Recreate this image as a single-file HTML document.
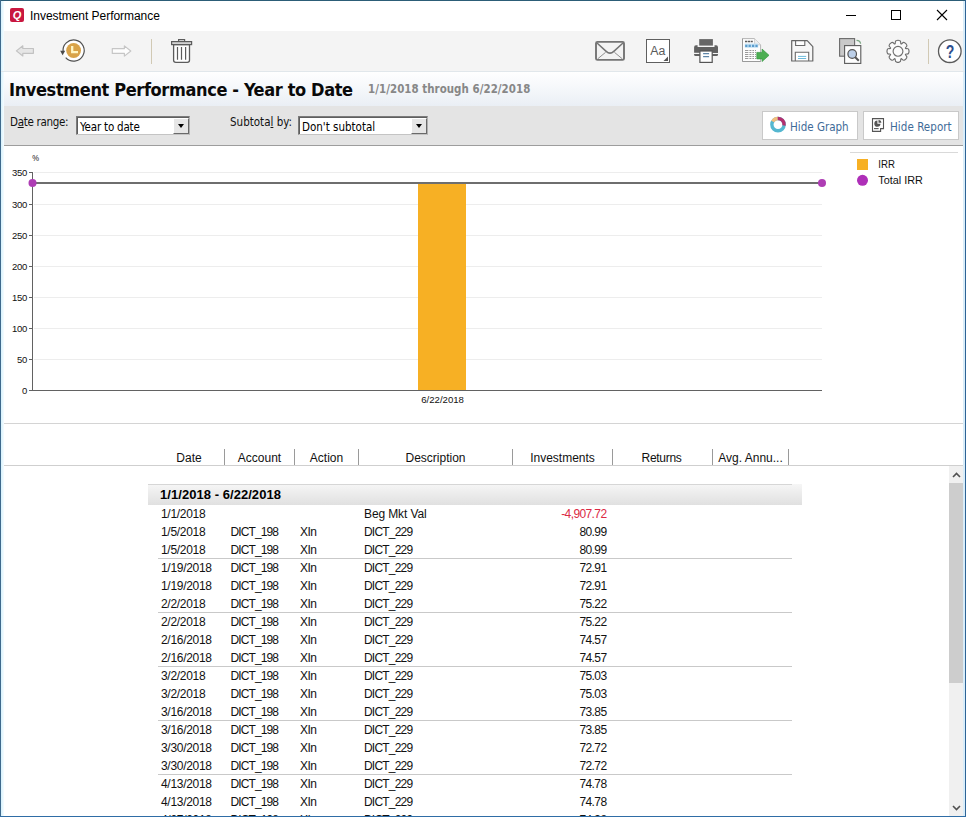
<!DOCTYPE html>
<html lang="en">
<head>
<meta charset="utf-8">
<title>Investment Performance</title>
<style>
*{box-sizing:border-box;margin:0;padding:0}
html,body{width:966px;height:817px;overflow:hidden;background:#fff}
body{position:relative;font-family:"Liberation Sans",sans-serif;font-size:12px;color:#111}
.abs{position:absolute}
#win{position:absolute;left:0;top:0;width:966px;height:817px;overflow:hidden;background:#fff}
#bT{left:0;top:0;width:966px;height:1px;background:#2c5d77}
#bL{left:0;top:0;width:1px;height:817px;background:#3f6a8d}
#bL2{left:1px;top:1px;width:3px;height:815px;background:linear-gradient(to right,#d6f2fd,#f6fcff)}
#bR{left:965px;top:0;width:1px;height:817px;background:#2e6496}
#bR2{left:963px;top:1px;width:2px;height:815px;background:#d9edf9}
#bB{left:0;top:816px;width:966px;height:1px;background:#2f6da6}
/* title bar */
#tbar{left:1px;top:1px;width:964px;height:30px;background:#fff}
#qicon{left:10px;top:8px;width:14px;height:14px;background:#c9173f;border-radius:2px;color:#fff;font:italic bold 11px "Liberation Sans",sans-serif;text-align:center;line-height:14px}
#ttext{left:30px;top:9px;letter-spacing:-0.04px;font:12px "Liberation Sans",sans-serif;color:#000;white-space:nowrap;line-height:15px}
/* toolbar */
#tool{left:1px;top:31px;width:964px;height:40px;background:#f4f4f4}
#toolline{left:1px;top:71px;width:964px;height:1px;background:#e1e7eb;z-index:2}
/* heading */
#head{left:1px;top:71px;width:964px;height:35px;background:linear-gradient(#ffffff 0%,#f6f8fb 45%,#eaeff5 100%)}
#h1{left:9px;top:79px;font:bold 18px "DejaVu Sans Condensed","DejaVu Sans",sans-serif;letter-spacing:-0.37px;color:#0a0a0a;white-space:nowrap;line-height:22px}
#h2{left:368px;top:82px;font:bold 11.4px "DejaVu Sans Condensed","DejaVu Sans",sans-serif;letter-spacing:0.05px;color:#878787;white-space:nowrap;line-height:14px}
/* filter */
#filt{left:1px;top:106px;width:964px;height:39px;background:#e4e4e4}
#filtline{left:1px;top:145px;width:964px;height:1px;background:#9d9d9d}
.lbl{font:11.5px "DejaVu Sans Condensed","DejaVu Sans",sans-serif;color:#111;white-space:nowrap;line-height:14px}
.combo{background:#fff;border:1px solid #7b7b7b;border-right-color:#b0b0b0;border-bottom-color:#c4c4c4;box-shadow:inset 1px 1px 0 #5e5e5e;height:19px}
.combo span{position:absolute;left:3px;top:3px;font:11.5px "DejaVu Sans Condensed","DejaVu Sans",sans-serif;line-height:14px;white-space:nowrap;color:#000}
.dd{position:absolute;right:0px;top:1px;width:16px;height:16px;background:#e6e6e6;border:1px solid #fff;border-right-color:#6a6a6a;border-bottom-color:#6a6a6a}
.dd:after{content:"";position:absolute;left:3.6px;top:5.2px;border:3.8px solid transparent;border-top:4.4px solid #000;border-bottom:0}
.btn{background:#fff;border:1px solid #c9c9c9;height:29px;top:111px}
.btn span{position:absolute;top:8px;font:11.5px "DejaVu Sans Condensed","DejaVu Sans",sans-serif;color:#3f6b98;line-height:14px;white-space:nowrap}
/* chart */
#chart{left:1px;top:146px;width:964px;height:277px;background:#fff}
#chartline{left:1px;top:423px;width:964px;height:1px;background:#d4d4d4}
/* column header */
.ch{top:451px;font:12px "Liberation Sans",sans-serif;color:#111;line-height:15px;white-space:nowrap;text-align:center}
.vs{top:449px;width:1px;height:17px;background:#9a9a9a}
#hline{left:1px;top:465px;width:963px;height:1px;background:#cfcfcf}
/* report */
#band{left:148px;top:484px;width:654px;height:21px;background:linear-gradient(#f6f6f6,#e0e0e0)}
#bandt{left:160px;top:487px;font:bold 13px "Liberation Sans",sans-serif;letter-spacing:0.05px;line-height:15px;white-space:nowrap;color:#000}
.row{left:0;width:966px;height:18px;font:12px "Liberation Sans",sans-serif;line-height:18px;white-space:nowrap;color:#111}
.row i{position:absolute;font-style:normal;top:0}
.c1{left:161px;letter-spacing:-0.3px}
.c2{left:230.5px;letter-spacing:-0.9px}
.c3{left:300px;letter-spacing:-0.5px}
.c4{left:364px;letter-spacing:-0.8px}
.c4b{letter-spacing:-0.12px}
.c5{right:359.5px;letter-spacing:-0.6px}
.sep{left:158px;width:634px;height:1px;background:#c9c9c9}
/* scrollbar */
#sb{left:949px;top:466px;width:15px;height:350px;background:#f0f0f0}
#sbt{left:949px;top:483px;width:15px;height:200px;background:#cdcdcd}
</style>
</head>
<body>
<div id="win">
<div class="abs" id="tbar"></div>
<div class="abs" id="qicon">Q</div>
<div class="abs" id="ttext">Investment Performance</div>
<svg class="abs" style="left:840px;top:5px" width="115" height="22" viewBox="840 5 115 22">
<path d="M846 15.5h10" stroke="#000" stroke-width="1" fill="none"/>
<rect x="891.5" y="10.5" width="9" height="9" stroke="#000" stroke-width="1" fill="none"/>
<path d="M937 10l10 10M947 10l-10 10" stroke="#000" stroke-width="1.1" fill="none"/>
</svg>

<div class="abs" id="tool"></div>
<div class="abs" id="toolline"></div>
<svg class="abs" style="left:0;top:31px" width="966" height="40" viewBox="0 31 966 40" font-family="Liberation Sans, sans-serif">
<!-- back arrow -->
<path d="M16.4 50.9 L22.8 45.8 V48.5 H33.4 V53.3 H22.8 V56 Z" fill="#e6e6e6" stroke="#c2c2c2" stroke-width="1.2" stroke-linejoin="round"/>
<!-- history -->
<circle cx="73.6" cy="50.5" r="10.6" fill="#fff"/>
<path d="M63.10 51.98 A10.6 10.6 0 1 1 65.72 57.59" fill="none" stroke="#505050" stroke-width="1.2"/>
<path d="M60.2 50.8 L65.2 50.8 L62.6 55.2 Z" fill="#4a4a4a"/>
<circle cx="73.6" cy="50.5" r="7.4" fill="#d9a349"/>
<path d="M72.2 46.1 V52.1 H78" fill="none" stroke="#fff6c4" stroke-width="2.3"/>
<!-- forward arrow -->
<path d="M130.8 51 L124.4 45.9 V48.6 H112.3 V53.4 H124.4 V56.1 Z" fill="#fdfdfd" stroke="#c6c6c6" stroke-width="1.2" stroke-linejoin="round"/>
<!-- separator -->
<path d="M151.5 39V64" stroke="#d1c9b4" stroke-width="1"/>
<!-- trash -->
<path d="M178.6 41.3 V39.6 H184.6 V41.3" fill="#f4f4f4" stroke="#5c5c5c" stroke-width="1.2"/>
<path d="M173.6 44.6 V60.2 Q173.6 62.3 175.8 62.3 H187.3 Q189.5 62.3 189.5 60.2 V44.6 Z" fill="#fff" stroke="#5c5c5c" stroke-width="1.3"/>
<rect x="171.6" y="41.6" width="20" height="3" fill="#d4d4d4" stroke="#5c5c5c" stroke-width="1.2"/>
<path d="M177.5 47V59.8M181.5 47V59.8M185.6 47V59.8" stroke="#5c5c5c" stroke-width="1.2"/>
<!-- envelope -->
<rect x="596" y="41.9" width="28" height="18" rx="1.5" fill="#f3f3f3" stroke="#747474" stroke-width="1.9"/>
<path d="M597 43 L606.2 51.4 Q610 54.9 613.8 51.4 L623 43" fill="none" stroke="#747474" stroke-width="1.5"/>
<path d="M597.5 59 L605.6 52.3M622.5 59 L614.4 52.3" stroke="#858585" stroke-width="0.9"/>
<!-- Aa -->
<rect x="646.5" y="39.5" width="23" height="23" fill="#fff" stroke="#5f5f5f" stroke-width="1"/>
<text x="650.3" y="54.7" font-size="12.3" fill="#5a5a5a">Aa</text>
<path d="M668 56.5V61H663.5Z" fill="#555"/>
<!-- printer -->
<rect x="699.2" y="39.1" width="13.7" height="6.5" fill="#666"/>
<path d="M694.1 52.8 V47.2 Q694.1 45.2 696 45.2 H697.6 V46.9 H714.5 V45.2 H716.1 Q718 45.2 718 47.2 V52.9 Z" fill="#616161"/>
<path d="M694.1 53.9 H718 V54.8 Q718 56 716.6 56 H695.5 Q694.1 56 694.1 54.8 Z" fill="#616161"/>
<rect x="699.9" y="51" width="12.3" height="11.4" fill="#fff" stroke="#555" stroke-width="1.2"/>
<path d="M703.1 53.6H709.1M703.1 56.6H709.1" stroke="#5f86a8" stroke-width="1.1"/>
<!-- export -->
<path d="M742.5 38.6 H754.6 L760.6 44.8 V61.5 H742.5 Z" fill="#fdfdfd" stroke="#b4b4b4" stroke-width="1"/>
<path d="M742.5 38.6 V61.5 H760.6" fill="none" stroke="#9a9a9a" stroke-width="1"/>
<path d="M754.6 38.6 V44.8 H760.6" fill="#efefef" stroke="#c4c4c4" stroke-width="0.8"/>
<path d="M745 41.6H753" stroke="#5a5a5a" stroke-width="1.5" stroke-dasharray="2.2 0.6"/>
<rect x="744.8" y="43.6" width="13.4" height="4.2" fill="#c4e2f4"/>
<path d="M745.2 45.8H758" stroke="#5b9ccc" stroke-width="2.2" stroke-dasharray="2.2 1.2"/>
<path d="M745 50.5H756M745 52.5H756M745 54.5H756M745 56.5H756M745 58.5H756" stroke="#8e8e8e" stroke-width="0.9" stroke-dasharray="3.4 1 2 1 1.6 1"/>
<path d="M756.8 52.4 H762.1 V49.1 L769 55.3 L762.1 61.5 V58.9 H756.8 Z" fill="#4cae52" stroke="#379a42" stroke-width="0.7" stroke-linejoin="round"/>
<!-- save -->
<path d="M791.7 40.6 H807.2 L812.8 46.6 V61 H791.7 Z" fill="#f7f7f7"/>
<path d="M795.6 40.6 V45.5 H804.8 V40.6" fill="#fff" stroke="#6a6a6a" stroke-width="1.1"/>
<path d="M795.3 61 V52.3 H808.7 V61" fill="#fff" stroke="#6a6a6a" stroke-width="1.1"/>
<path d="M798 56.4H806.2M798 58.5H806.2" stroke="#6fbcdc" stroke-width="1"/>
<path d="M791.7 40.6 H807.2 L812.8 46.6 V61 H791.7 Z" fill="none" stroke="#666" stroke-width="1.2" stroke-linejoin="round"/>
<!-- preview -->
<rect x="839.6" y="38.6" width="15" height="17.6" fill="#c9c9c9" stroke="#6a6a6a" stroke-width="1.1"/>
<path d="M856.5 40.3 Q860.3 40.3 860.6 43.8" fill="none" stroke="#7da684" stroke-width="1.2"/>
<rect x="844.6" y="45.6" width="16.2" height="17.8" fill="#fdfdfd" stroke="#5a5a5a" stroke-width="1.1"/>
<path d="M855 57 L858.8 60.8" stroke="#555" stroke-width="2"/>
<circle cx="852.2" cy="54" r="4.3" fill="#bccfe8" stroke="#555" stroke-width="1.2"/>
<!-- gear -->
<g transform="translate(898 51.3)" fill="#fbfbfb" stroke="#6e6e6e" stroke-width="1.15">
<path d="M-3.06 -7.39 C-1.98 -7.75 -3.95 -10.48 -1.30 -10.82 Q0.00 -11.25 1.30 -10.82 C3.95 -10.48 1.98 -7.75 3.06 -7.39 C4.08 -6.88 4.62 -10.20 6.73 -8.57 Q7.95 -7.95 8.57 -6.73 C10.20 -4.62 6.88 -4.08 7.39 -3.06 C7.75 -1.98 10.48 -3.95 10.82 -1.30 Q11.25 0.00 10.82 1.30 C10.48 3.95 7.75 1.98 7.39 3.06 C6.88 4.08 10.20 4.62 8.57 6.73 Q7.95 7.95 6.73 8.57 C4.62 10.20 4.08 6.88 3.06 7.39 C1.98 7.75 3.95 10.48 1.30 10.82 Q0.00 11.25 -1.30 10.82 C-3.95 10.48 -1.98 7.75 -3.06 7.39 C-4.08 6.88 -4.62 10.20 -6.73 8.57 Q-7.95 7.95 -8.57 6.73 C-10.20 4.62 -6.88 4.08 -7.39 3.06 C-7.75 1.98 -10.48 3.95 -10.82 1.30 Q-11.25 0.00 -10.82 -1.30 C-10.48 -3.95 -7.75 -1.98 -7.39 -3.06 C-6.88 -4.08 -10.20 -4.62 -8.57 -6.73 Q-7.95 -7.95 -6.73 -8.57 C-4.62 -10.20 -4.08 -6.88 -3.06 -7.39 Z" stroke-linejoin="round"/>
<circle r="4.9"/>
</g>
<!-- separator -->
<path d="M928.5 39V64" stroke="#d1c9b4" stroke-width="1"/>
<!-- help -->
<circle cx="949.8" cy="51.2" r="11.3" fill="#fff" stroke="#5a5a5a" stroke-width="1.3"/>
<text x="950" y="58.3" font-size="18" font-weight="bold" fill="#2d4f8e" text-anchor="middle" textLength="8.6" lengthAdjust="spacingAndGlyphs">?</text>
</svg>


<div class="abs" id="head"></div>
<div class="abs" id="h1">Investment Performance - Year to Date</div>
<div class="abs" id="h2">1/1/2018 through 6/22/2018</div>

<div class="abs" id="filt"></div>
<div class="abs" id="filtline"></div>
<div class="abs lbl" style="left:10px;top:115px;letter-spacing:-0.3px">D<u>a</u>te range:</div>
<div class="abs combo" style="left:76px;top:116px;width:114px"><span style="letter-spacing:-0.2px">Year to date</span><div class="dd"></div></div>
<div class="abs lbl" style="left:230px;top:115px">Subtota<u>l</u> by:</div>
<div class="abs combo" style="left:298px;top:116px;width:130px"><span>Don't subtotal</span><div class="dd"></div></div>
<div class="abs btn" style="left:762px;width:96px"><span style="left:27px">Hide Graph</span></div>
<div class="abs btn" style="left:863px;width:96px"><span style="left:26px;letter-spacing:0.05px">Hide Report</span></div>
<svg class="abs" style="left:762px;top:111px" width="197" height="29" viewBox="762 111 197 29">
<g fill="none" stroke-width="3.4">
<circle cx="778.0" cy="124.6" r="6.15" stroke="#55b7d0"/>
<path d="M772.67 121.52 A6.15 6.15 0 0 1 777.79 118.45" stroke="#f3bd7c"/>
<path d="M777.79 118.45 A6.15 6.15 0 0 1 784.09 125.46" stroke="#b42f6e"/>
</g>
<path d="M872.5 118.6 H883.5 V128.6 H880.6 V131.4 H872.5 Z" fill="#fff" stroke="#555" stroke-width="1.1"/>
<path d="M874 128.6H878.6" stroke="#555" stroke-width="1.1"/>
<path d="M877.4 120.6 A3.1 3.1 0 1 0 880.5 123.8 H877.4 Z" fill="#555"/>
<path d="M878.5 119.9 A2.9 2.9 0 0 1 881.4 122.8 H878.5 Z" fill="#555"/>
</svg>


<div class="abs" id="chart"></div>
<svg class="abs" style="left:0;top:146px" width="966" height="277" viewBox="0 146 966 277" font-family="Liberation Sans, sans-serif">
<g stroke="#ededed" stroke-width="1">
<path d="M34 172.5H822M34 204.5H822M34 235.5H822M34 266.5H822M34 297.5H822M34 328.5H822M34 359.5H822"/>
</g>
<rect x="418" y="183" width="48" height="208" fill="#f7b024"/>
<path d="M32.5 172V391M32 390.5H822" stroke="#626262" stroke-width="1" fill="none"/>
<path d="M29 172.5h4M29 204.5h4M29 235.5h4M29 266.5h4M29 297.5h4M29 328.5h4M29 359.5h4M29 390.5h4" stroke="#626262" stroke-width="1"/>
<path d="M32 183H822" stroke="#6e6e6e" stroke-width="2"/>
<circle cx="32.5" cy="183" r="4" fill="#ae3db4"/>
<circle cx="822" cy="183" r="4" fill="#ae3db4"/>
<g font-size="9.5" fill="#111" text-anchor="end" letter-spacing="-0.25">
<text x="27" y="175.8">350</text>
<text x="27" y="207.8">300</text>
<text x="27" y="238.8">250</text>
<text x="27" y="269.8">200</text>
<text x="27" y="300.8">150</text>
<text x="27" y="331.8">100</text>
<text x="27" y="362.8">50</text>
<text x="27" y="393.8">0</text>
</g>
<text x="32.2" y="160.8" font-size="9.6" fill="#111" textLength="6.8" lengthAdjust="spacingAndGlyphs">%</text>
<text x="442.6" y="402.8" font-size="9.6" fill="#111" text-anchor="middle">6/22/2018</text>
<path d="M850 152.5H958" stroke="#d9d9d9" stroke-width="1"/>
<rect x="857" y="159" width="11" height="11" fill="#f7b024"/>
<circle cx="862.5" cy="180.3" r="5.5" fill="#ae2fb8"/>
<text x="878.3" y="167.9" font-size="10.5" fill="#111" textLength="16.6" lengthAdjust="spacingAndGlyphs">IRR</text>
<text x="878.3" y="183.9" font-size="10.5" fill="#111" textLength="44.6" lengthAdjust="spacingAndGlyphs">Total IRR</text>
</svg>

<div class="abs" id="chartline"></div>

<div class="abs ch" style="left:159px;width:60px">Date</div>
<div class="abs ch" style="left:225px;width:69px">Account</div>
<div class="abs ch" style="left:295px;width:63px">Action</div>
<div class="abs ch" style="left:359px;width:153px">Description</div>
<div class="abs ch" style="left:513px;width:99px">Investments</div>
<div class="abs ch" style="left:612px;width:99px;letter-spacing:-0.3px">Returns</div>
<div class="abs ch" style="left:713px;width:75px">Avg. Annu...</div>
<div class="abs vs" style="left:224px"></div>
<div class="abs vs" style="left:294px"></div>
<div class="abs vs" style="left:358px"></div>
<div class="abs vs" style="left:512px"></div>
<div class="abs vs" style="left:612px"></div>
<div class="abs vs" style="left:712px"></div>
<div class="abs vs" style="left:788px"></div>
<div class="abs" id="hline"></div>

<div class="abs" id="band"></div>
<div class="abs" id="bandt">1/1/2018 - 6/22/2018</div>
<div class="abs row" style="top:505px"><i class="c1">1/1/2018</i><i class="c4 c4b">Beg Mkt Val</i><i class="c5" style="color:#dc2a44">-4,907.72</i></div>
<div class="abs row" style="top:523px"><i class="c1">1/5/2018</i><i class="c2">DICT_198</i><i class="c3">XIn</i><i class="c4">DICT_229</i><i class="c5">80.99</i></div>
<div class="abs row" style="top:541px"><i class="c1">1/5/2018</i><i class="c2">DICT_198</i><i class="c3">XIn</i><i class="c4">DICT_229</i><i class="c5">80.99</i></div>
<div class="abs sep" style="top:558px"></div>
<div class="abs row" style="top:559px"><i class="c1">1/19/2018</i><i class="c2">DICT_198</i><i class="c3">XIn</i><i class="c4">DICT_229</i><i class="c5">72.91</i></div>
<div class="abs row" style="top:577px"><i class="c1">1/19/2018</i><i class="c2">DICT_198</i><i class="c3">XIn</i><i class="c4">DICT_229</i><i class="c5">72.91</i></div>
<div class="abs row" style="top:595px"><i class="c1">2/2/2018</i><i class="c2">DICT_198</i><i class="c3">XIn</i><i class="c4">DICT_229</i><i class="c5">75.22</i></div>
<div class="abs sep" style="top:612px"></div>
<div class="abs row" style="top:613px"><i class="c1">2/2/2018</i><i class="c2">DICT_198</i><i class="c3">XIn</i><i class="c4">DICT_229</i><i class="c5">75.22</i></div>
<div class="abs row" style="top:631px"><i class="c1">2/16/2018</i><i class="c2">DICT_198</i><i class="c3">XIn</i><i class="c4">DICT_229</i><i class="c5">74.57</i></div>
<div class="abs row" style="top:649px"><i class="c1">2/16/2018</i><i class="c2">DICT_198</i><i class="c3">XIn</i><i class="c4">DICT_229</i><i class="c5">74.57</i></div>
<div class="abs sep" style="top:666px"></div>
<div class="abs row" style="top:667px"><i class="c1">3/2/2018</i><i class="c2">DICT_198</i><i class="c3">XIn</i><i class="c4">DICT_229</i><i class="c5">75.03</i></div>
<div class="abs row" style="top:685px"><i class="c1">3/2/2018</i><i class="c2">DICT_198</i><i class="c3">XIn</i><i class="c4">DICT_229</i><i class="c5">75.03</i></div>
<div class="abs row" style="top:703px"><i class="c1">3/16/2018</i><i class="c2">DICT_198</i><i class="c3">XIn</i><i class="c4">DICT_229</i><i class="c5">73.85</i></div>
<div class="abs sep" style="top:720px"></div>
<div class="abs row" style="top:721px"><i class="c1">3/16/2018</i><i class="c2">DICT_198</i><i class="c3">XIn</i><i class="c4">DICT_229</i><i class="c5">73.85</i></div>
<div class="abs row" style="top:739px"><i class="c1">3/30/2018</i><i class="c2">DICT_198</i><i class="c3">XIn</i><i class="c4">DICT_229</i><i class="c5">72.72</i></div>
<div class="abs row" style="top:757px"><i class="c1">3/30/2018</i><i class="c2">DICT_198</i><i class="c3">XIn</i><i class="c4">DICT_229</i><i class="c5">72.72</i></div>
<div class="abs sep" style="top:774px"></div>
<div class="abs row" style="top:775px"><i class="c1">4/13/2018</i><i class="c2">DICT_198</i><i class="c3">XIn</i><i class="c4">DICT_229</i><i class="c5">74.78</i></div>
<div class="abs row" style="top:793px"><i class="c1">4/13/2018</i><i class="c2">DICT_198</i><i class="c3">XIn</i><i class="c4">DICT_229</i><i class="c5">74.78</i></div>
<div class="abs row" style="top:811px"><i class="c1">4/27/2018</i><i class="c2">DICT_198</i><i class="c3">XIn</i><i class="c4">DICT_229</i><i class="c5">74.38</i></div>
<div class="abs sep" style="top:828px"></div>
<div class="abs sep" style="left:148px;width:644px;top:484px;background:#d6d6d6"></div>

<div class="abs" id="sb"></div>
<div class="abs" id="sbt"></div>
<svg class="abs" style="left:949px;top:466px" width="15" height="349" viewBox="0 0 15 349">
<path d="M4 11l3.5-3.5L11 11" stroke="#505050" stroke-width="1.6" fill="none"/>
<path d="M4 340l3.5 3.5L11 340" stroke="#505050" stroke-width="1.6" fill="none"/>
</svg>

<div class="abs" id="bL2"></div>
<div class="abs" id="bR2"></div>
<div class="abs" id="bT"></div>
<div class="abs" id="bL"></div>
<div class="abs" id="bR"></div>
<div class="abs" id="bB"></div>
</div>
</body>
</html>
